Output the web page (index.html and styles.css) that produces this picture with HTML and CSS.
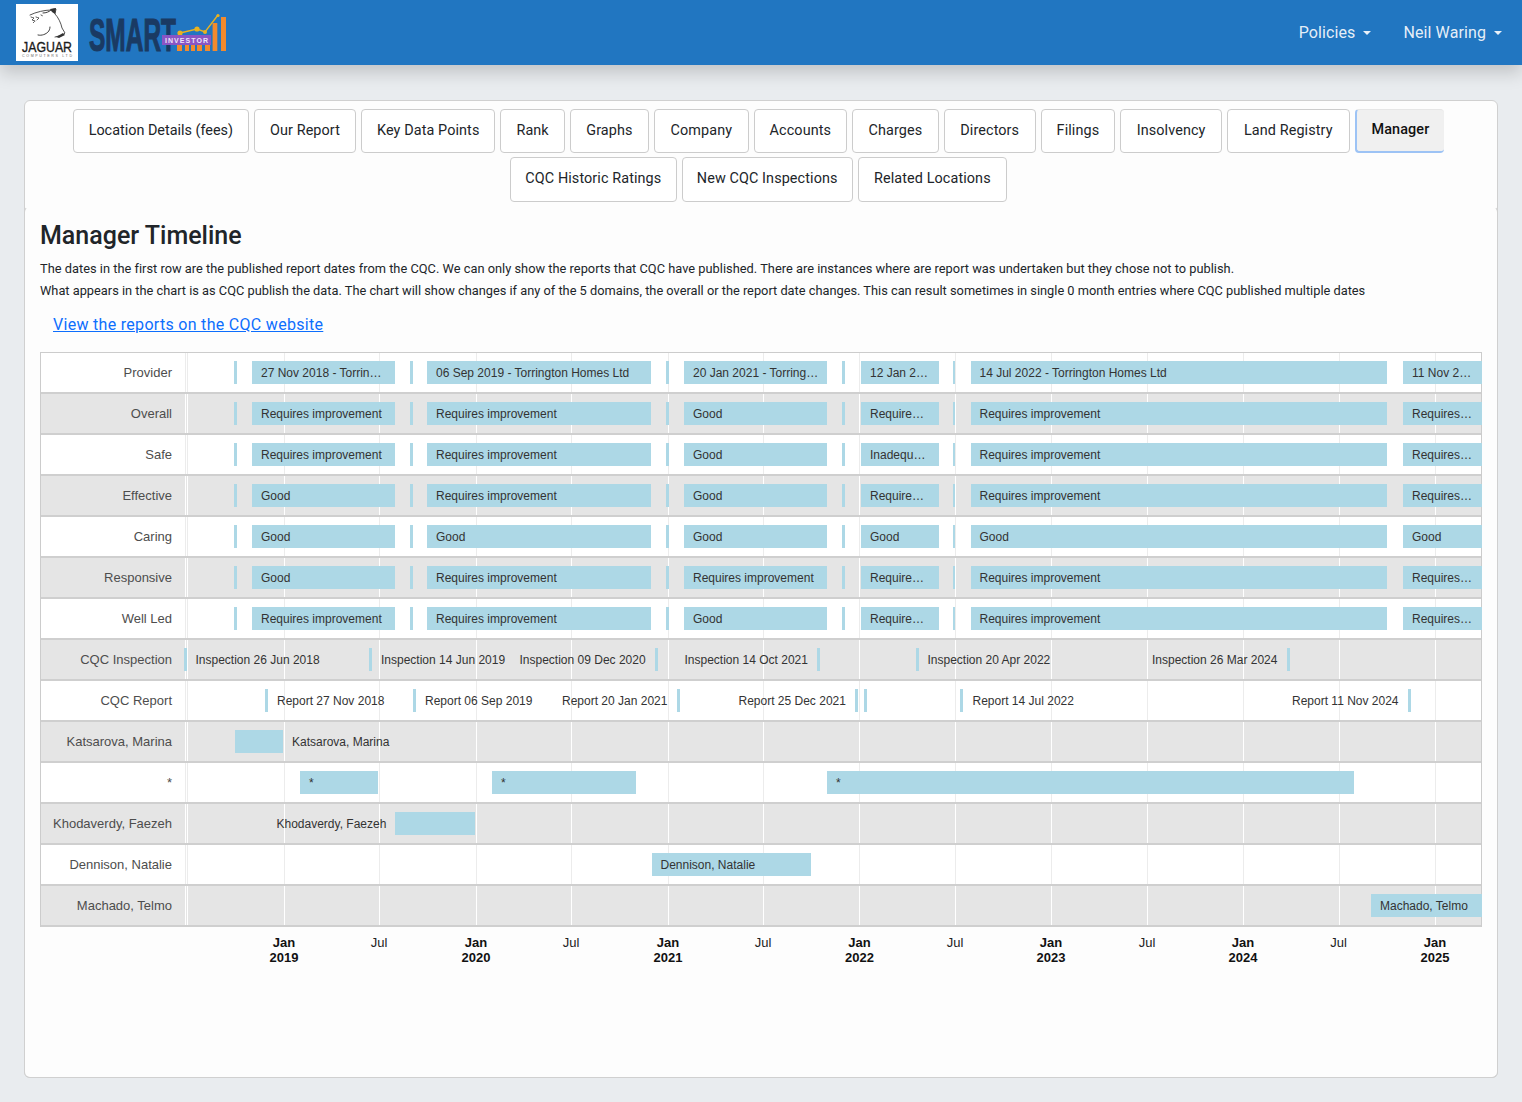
FILE: index.html
```html
<!DOCTYPE html>
<html lang="en">
<head>
<meta charset="utf-8">
<title>Manager Timeline</title>
<link rel="stylesheet" href="styles.css">
</head>
<body>
<header class="topbar">
  <div class="brand">
    <svg class="logo-jaguar" viewBox="0 0 62 57" width="62" height="57">
      <rect width="62" height="57" fill="#fff"/>
      <g fill="none" stroke="#3f3f3f" stroke-linecap="round" stroke-linejoin="round">
        <path d="M14 11C20 8 29 6 35 6c2-1 3-1 5-1l-1 5c3 3 6 9 7 14l3 5-2 2-8 2" stroke-width=".9"/>
        <path d="M22 31c4 1 8-1 10-3 1-1 2-3 2-5M35 6c-2 2-5 3-8 3" stroke-width="1"/>
        <path d="M15 13l3 1-2 2 3 1-2 2M20 13l3 1-2 2M25 11l2 1" stroke-width=".9" stroke-dasharray="1.5 1"/>
      </g>
      <path d="M34 5l6-1-1 6-3-2z" fill="#333"/>
      <path d="M40 33l7-4 2 2-6 3z" fill="#333"/>
      <text x="6" y="48" class="jag-word" textLength="50" lengthAdjust="spacingAndGlyphs">JAGUAR</text>
      <text x="6" y="52.5" class="jag-sub" textLength="50">COMPUTERS LTD</text>
    </svg>
    <svg class="logo-smart" viewBox="0 0 140 40" width="140" height="40">
      <text x="0" y="37" class="smart-word" textLength="87" lengthAdjust="spacingAndGlyphs">SMART</text>
      <g fill="#f28a2e">
        <rect x="88" y="30" width="5" height="7"/><rect x="96" y="30" width="4" height="7"/>
        <rect x="102" y="30" width="4" height="7"/><rect x="108" y="24" width="5" height="13"/>
        <rect x="116" y="24" width="5" height="13"/><rect x="123.6" y="9" width="4.7" height="28"/>
        <rect x="132" y="3" width="5" height="34"/>
      </g>
      <path d="M91 19l17-4 8 3 13-17" fill="none" stroke="#e9b21f" stroke-width="1.4"/>
      <g fill="#e9b21f"><circle cx="91" cy="19" r="2.6"/><circle cx="108" cy="15" r="2.6"/><circle cx="116" cy="18" r="2"/><circle cx="129" cy="1.5" r="1.6"/></g>
      <rect x="73" y="21" width="49" height="10" fill="#8a55c4"/>
      <text x="76" y="28.6" class="smart-tag" textLength="43">INVESTOR</text>
    </svg>
  </div>
  <nav class="usernav">
    <a class="navlink">Policies</a>
    <a class="navlink">Neil Waring</a>
  </nav>
</header>

<main class="card">
  <div class="tabs">
    <a class="tab">Location Details (fees)</a>
    <a class="tab">Our Report</a>
    <a class="tab">Key Data Points</a>
    <a class="tab">Rank</a>
    <a class="tab">Graphs</a>
    <a class="tab">Company</a>
    <a class="tab">Accounts</a>
    <a class="tab">Charges</a>
    <a class="tab">Directors</a>
    <a class="tab">Filings</a>
    <a class="tab">Insolvency</a>
    <a class="tab">Land Registry</a>
    <a class="tab active">Manager</a>
    <a class="tab">CQC Historic Ratings</a>
    <a class="tab">New CQC Inspections</a>
    <a class="tab">Related Locations</a>
  </div>
  <section class="pane">
    <h1 class="title">Manager Timeline</h1>
    <p class="note note-first">The dates in the first row are the published report dates from the CQC. We can only show the reports that CQC have published. There are instances where are report was undertaken but they chose not to publish.</p>
    <p class="note">What appears in the chart is as CQC publish the data. The chart will show changes if any of the 5 domains, the overall or the report date changes. This can result sometimes in single 0 month entries where CQC published multiple dates</p>
    <a class="reports-link">View the reports on the CQC website</a>

    <div class="chart">
      <div class="row"><div class="label">Provider</div><div class="track">
        <i class="bar" style="left:50px;width:3px"></i>
        <i class="bar" style="left:68px;width:143px">27 Nov 2018 - Torrin…</i>
        <i class="bar" style="left:226px;width:3px"></i>
        <i class="bar" style="left:243px;width:224px">06 Sep 2019 - Torrington Homes Ltd</i>
        <i class="bar" style="left:482px;width:3px"></i>
        <i class="bar" style="left:500px;width:143px">20 Jan 2021 - Torring…</i>
        <i class="bar" style="left:658px;width:3px"></i>
        <i class="bar" style="left:677px;width:78px">12 Jan 2…</i>
        <i class="bar" style="left:769px;width:2px"></i>
        <i class="bar" style="left:786.5px;width:416px">14 Jul 2022 - Torrington Homes Ltd</i>
        <i class="bar" style="left:1219px;width:79px">11 Nov 2…</i>
      </div></div>
      <div class="row"><div class="label">Overall</div><div class="track">
        <i class="bar" style="left:50px;width:3px"></i>
        <i class="bar" style="left:68px;width:143px">Requires improvement</i>
        <i class="bar" style="left:226px;width:3px"></i>
        <i class="bar" style="left:243px;width:224px">Requires improvement</i>
        <i class="bar" style="left:482px;width:3px"></i>
        <i class="bar" style="left:500px;width:143px">Good</i>
        <i class="bar" style="left:658px;width:3px"></i>
        <i class="bar" style="left:677px;width:78px">Require…</i>
        <i class="bar" style="left:769px;width:2px"></i>
        <i class="bar" style="left:786.5px;width:416px">Requires improvement</i>
        <i class="bar" style="left:1219px;width:79px">Requires…</i>
      </div></div>
      <div class="row"><div class="label">Safe</div><div class="track">
        <i class="bar" style="left:50px;width:3px"></i>
        <i class="bar" style="left:68px;width:143px">Requires improvement</i>
        <i class="bar" style="left:226px;width:3px"></i>
        <i class="bar" style="left:243px;width:224px">Requires improvement</i>
        <i class="bar" style="left:482px;width:3px"></i>
        <i class="bar" style="left:500px;width:143px">Good</i>
        <i class="bar" style="left:658px;width:3px"></i>
        <i class="bar" style="left:677px;width:78px">Inadequ…</i>
        <i class="bar" style="left:769px;width:2px"></i>
        <i class="bar" style="left:786.5px;width:416px">Requires improvement</i>
        <i class="bar" style="left:1219px;width:79px">Requires…</i>
      </div></div>
      <div class="row"><div class="label">Effective</div><div class="track">
        <i class="bar" style="left:50px;width:3px"></i>
        <i class="bar" style="left:68px;width:143px">Good</i>
        <i class="bar" style="left:226px;width:3px"></i>
        <i class="bar" style="left:243px;width:224px">Requires improvement</i>
        <i class="bar" style="left:482px;width:3px"></i>
        <i class="bar" style="left:500px;width:143px">Good</i>
        <i class="bar" style="left:658px;width:3px"></i>
        <i class="bar" style="left:677px;width:78px">Require…</i>
        <i class="bar" style="left:769px;width:2px"></i>
        <i class="bar" style="left:786.5px;width:416px">Requires improvement</i>
        <i class="bar" style="left:1219px;width:79px">Requires…</i>
      </div></div>
      <div class="row"><div class="label">Caring</div><div class="track">
        <i class="bar" style="left:50px;width:3px"></i>
        <i class="bar" style="left:68px;width:143px">Good</i>
        <i class="bar" style="left:226px;width:3px"></i>
        <i class="bar" style="left:243px;width:224px">Good</i>
        <i class="bar" style="left:482px;width:3px"></i>
        <i class="bar" style="left:500px;width:143px">Good</i>
        <i class="bar" style="left:658px;width:3px"></i>
        <i class="bar" style="left:677px;width:78px">Good</i>
        <i class="bar" style="left:769px;width:2px"></i>
        <i class="bar" style="left:786.5px;width:416px">Good</i>
        <i class="bar" style="left:1219px;width:79px">Good</i>
      </div></div>
      <div class="row"><div class="label">Responsive</div><div class="track">
        <i class="bar" style="left:50px;width:3px"></i>
        <i class="bar" style="left:68px;width:143px">Good</i>
        <i class="bar" style="left:226px;width:3px"></i>
        <i class="bar" style="left:243px;width:224px">Requires improvement</i>
        <i class="bar" style="left:482px;width:3px"></i>
        <i class="bar" style="left:500px;width:143px">Requires improvement</i>
        <i class="bar" style="left:658px;width:3px"></i>
        <i class="bar" style="left:677px;width:78px">Require…</i>
        <i class="bar" style="left:769px;width:2px"></i>
        <i class="bar" style="left:786.5px;width:416px">Requires improvement</i>
        <i class="bar" style="left:1219px;width:79px">Requires…</i>
      </div></div>
      <div class="row"><div class="label">Well Led</div><div class="track">
        <i class="bar" style="left:50px;width:3px"></i>
        <i class="bar" style="left:68px;width:143px">Requires improvement</i>
        <i class="bar" style="left:226px;width:3px"></i>
        <i class="bar" style="left:243px;width:224px">Requires improvement</i>
        <i class="bar" style="left:482px;width:3px"></i>
        <i class="bar" style="left:500px;width:143px">Good</i>
        <i class="bar" style="left:658px;width:3px"></i>
        <i class="bar" style="left:677px;width:78px">Require…</i>
        <i class="bar" style="left:769px;width:2px"></i>
        <i class="bar" style="left:786.5px;width:416px">Requires improvement</i>
        <i class="bar" style="left:1219px;width:79px">Requires…</i>
      </div></div>
      <div class="row"><div class="label">CQC Inspection</div><div class="track">
        <i class="bar" style="left:0;width:3px"></i><span class="side" style="left:11.5px">Inspection 26 Jun 2018</span>
        <i class="bar" style="left:185px;width:3px"></i><span class="side" style="left:197px">Inspection 14 Jun 2019</span>
        <span class="side" style="left:335.5px">Inspection 09 Dec 2020</span><i class="bar" style="left:471px;width:3px"></i>
        <span class="side" style="left:500.5px">Inspection 14 Oct 2021</span><i class="bar" style="left:633px;width:3px"></i>
        <i class="bar" style="left:731.5px;width:3px"></i><span class="side" style="left:743.5px">Inspection 20 Apr 2022</span>
        <span class="side" style="left:968px">Inspection 26 Mar 2024</span><i class="bar" style="left:1103px;width:3px"></i>
      </div></div>
      <div class="row"><div class="label">CQC Report</div><div class="track">
        <i class="bar" style="left:81px;width:3px"></i><span class="side" style="left:93px">Report 27 Nov 2018</span>
        <i class="bar" style="left:229px;width:3px"></i><span class="side" style="left:241px">Report 06 Sep 2019</span>
        <span class="side" style="left:378px">Report 20 Jan 2021</span><i class="bar" style="left:493px;width:3px"></i>
        <span class="side" style="left:554.5px">Report 25 Dec 2021</span><i class="bar" style="left:671px;width:3px"></i>
        <i class="bar" style="left:680px;width:3px"></i>
        <i class="bar" style="left:776px;width:3px"></i><span class="side" style="left:788.5px">Report 14 Jul 2022</span>
        <span class="side" style="left:1108px">Report 11 Nov 2024</span><i class="bar" style="left:1224px;width:3px"></i>
      </div></div>
      <div class="row"><div class="label">Katsarova, Marina</div><div class="track">
        <i class="bar" style="left:51px;width:48px"></i><span class="side" style="left:108px">Katsarova, Marina</span>
      </div></div>
      <div class="row"><div class="label">*</div><div class="track">
        <i class="bar" style="left:116px;width:78px">*</i>
        <i class="bar" style="left:308px;width:143.5px">*</i>
        <i class="bar" style="left:643px;width:527px">*</i>
      </div></div>
      <div class="row"><div class="label">Khodaverdy, Faezeh</div><div class="track">
        <span class="side" style="left:92.5px">Khodaverdy, Faezeh</span><i class="bar" style="left:211px;width:80px"></i>
      </div></div>
      <div class="row"><div class="label">Dennison, Natalie</div><div class="track">
        <i class="bar" style="left:467.5px;width:159.5px">Dennison, Natalie</i>
      </div></div>
      <div class="row"><div class="label">Machado, Telmo</div><div class="track">
        <i class="bar" style="left:1187px;width:111px">Machado, Telmo</i>
      </div></div>
    </div>

    <div class="axis">
      <span class="tick major" style="left:100px">Jan<br>2019</span>
      <span class="tick" style="left:195px">Jul</span>
      <span class="tick major" style="left:292px">Jan<br>2020</span>
      <span class="tick" style="left:387px">Jul</span>
      <span class="tick major" style="left:484px">Jan<br>2021</span>
      <span class="tick" style="left:579px">Jul</span>
      <span class="tick major" style="left:675.5px">Jan<br>2022</span>
      <span class="tick" style="left:771px">Jul</span>
      <span class="tick major" style="left:867px">Jan<br>2023</span>
      <span class="tick" style="left:963px">Jul</span>
      <span class="tick major" style="left:1059px">Jan<br>2024</span>
      <span class="tick" style="left:1154.5px">Jul</span>
      <span class="tick major" style="left:1251px">Jan<br>2025</span>
    </div>
  </section>
</main>
</body>
</html>
```
FILE: styles.css
```css
* { box-sizing: border-box; }
html, body { margin: 0; }
body {
  background: #e9ecef;
  font-family: Roboto, "Liberation Sans", sans-serif;
  color: #212529;
  height: 1102px;
  overflow: hidden;
}
.topbar {
  height: 65px;
  background: #2176c1;
  display: flex;
  align-items: center;
  justify-content: space-between;
  padding: 0 12px 0 16px;
  box-shadow: 0 8px 16px rgba(0, 0, 0, .17);
}
.brand { display: flex; align-items: center; gap: 11px; }
.logo-jaguar { display: block; }
.logo-smart { display: block; margin-top: 3px; overflow: visible; }
.jag-word { font: 400 15px "Liberation Sans", sans-serif; fill: #1b1b1b; stroke: #1b1b1b; stroke-width: .35px; }
.jag-sub { font: 400 3.6px "Liberation Sans", sans-serif; fill: #666; }
.smart-word { font: 700 47px "Liberation Sans", sans-serif; fill: #1a3a63; stroke: #1a3a63; stroke-width: 1.2px; }
.smart-tag { font: 700 7px "Liberation Sans", sans-serif; fill: #ece3f8; }
.usernav { display: flex; gap: 16px; }
.navlink {
  color: rgba(255, 255, 255, .9);
  font-size: 16px;
  letter-spacing: .1px;
  padding: 8px;
  display: flex;
  align-items: center;
}
.navlink::after {
  content: "";
  margin-left: 8px;
  border-top: 4.8px solid;
  border-left: 4.8px solid transparent;
  border-right: 4.8px solid transparent;
}
.card {
  margin: 35px 24px 0;
  height: 978px;
  background: #fdfdfd;
  border: 1px solid #d0d0d0;
  border-radius: 6px;
}
.tabs {
  display: flex;
  flex-wrap: wrap;
  justify-content: center;
  gap: 4px 5px;
  padding: 8px 5px 4px 0;
  height: 105px;
}
.tab {
  height: 44px;
  padding: 0 15px 2px;
  display: flex;
  align-items: center;
  font-size: 14.4px;
  letter-spacing: .1px;
  background: #fff;
  border: 1px solid #ccc;
  border-radius: 4px;
  color: #212529;
}
.tab:nth-child(1) { letter-spacing: 0; }
.tab:nth-child(5), .tab:nth-child(6), .tab:nth-child(8),
.tab:nth-child(9), .tab:nth-child(11) { padding: 0 15.5px 2px; }
.tab:nth-child(12) { padding: 0 16px 2px; }
.tabs .tab:nth-child(n+14) { height: 45px; }
.tabs .tab:nth-child(14) { padding: 0 14.5px 2px; }
.tabs .tab:nth-child(15) { padding: 0 14px 2px; }
.tabs .tab:nth-child(16) { padding: 0 15.5px 2px; }
.tab.active {
  background: #f0f0f0;
  font-weight: 500;
  color: #111;
  padding-bottom: 3px;
  border: 0;
  border-left: 2px solid #9dc3f5;
  border-bottom: 2px solid #9dc3f5;
  border-top: 1px solid #e6e6e6;
}
.pane {
  margin: 0 -1px -1px;
  height: 872px;
  padding: 14px 15px 0;
  border: 1px solid #d0d0d0;
  border-top-color: transparent;
  border-radius: 6px;
  background: #fdfdfd;
}
.title {
  margin: 0 0 8px;
  font-size: 25px;
  line-height: 29px;
  font-weight: 500;
}
.note {
  margin: 0;
  font-size: 12.8px;
  line-height: 22px;
}
.note-first { letter-spacing: .02px; }
.reports-link {
  display: block;
  margin: 11px 0 15px 13px;
  color: #0d6efd;
  text-decoration: underline;
  font-size: 16px;
  letter-spacing: .3px;
  line-height: 24px;
}
.chart {
  width: 1442px;
  border: 1px solid #ccc;
  border-bottom: 0;
  font-family: "Liberation Sans", Arial, sans-serif;
}
.row {
  display: flex;
  height: 41px;
  background: #fff;
  --grid: #ececec;
  border-bottom: 2px solid #cfcfcf;
}
.row:nth-child(even) { background: #e5e5e5; --grid: #fff; }
.label {
  width: 143px;
  flex: none;
  padding-right: 12px;
  text-align: right;
  font-size: 13px;
  line-height: 39px;
  color: #4d4d4d;
  white-space: nowrap;
}
.track {
  flex: 1;
  position: relative;
  background-image:
    linear-gradient(var(--grid), var(--grid)), linear-gradient(var(--grid), var(--grid)),
    linear-gradient(var(--grid), var(--grid)), linear-gradient(var(--grid), var(--grid)),
    linear-gradient(var(--grid), var(--grid)), linear-gradient(var(--grid), var(--grid)),
    linear-gradient(var(--grid), var(--grid)), linear-gradient(var(--grid), var(--grid)),
    linear-gradient(var(--grid), var(--grid)), linear-gradient(var(--grid), var(--grid)),
    linear-gradient(var(--grid), var(--grid)), linear-gradient(var(--grid), var(--grid)),
    linear-gradient(var(--grid), var(--grid)), linear-gradient(var(--grid), var(--grid)),
    linear-gradient(var(--grid), var(--grid));
  background-repeat: no-repeat;
  background-size: 1px 100%;
  background-position:
    1px 0, 3px 0, 100px 0, 195px 0, 292px 0, 387px 0, 484px 0, 579px 0,
    675px 0, 771px 0, 867px 0, 963px 0, 1059px 0, 1155px 0, 1251px 0;
}
.bar, .side {
  position: absolute;
  top: 8px;
  height: 23px;
  font-style: normal;
  font-size: 12px;
  line-height: 25px;
  white-space: nowrap;
  color: #333;
}
.bar { background: #add8e6; overflow: hidden; }
.bar:not(:empty) { padding-left: 9px; }
.axis {
  position: relative;
  height: 40px;
  margin-top: 8px;
  width: 1442px;
  font-family: "Liberation Sans", Arial, sans-serif;
}
.tick {
  position: absolute;
  top: 0;
  margin-left: 144px;
  transform: translateX(-50%);
  font-size: 13px;
  line-height: 15px;
  text-align: center;
  color: #222;
}
.tick.major { font-weight: 700; color: #111; }
```
